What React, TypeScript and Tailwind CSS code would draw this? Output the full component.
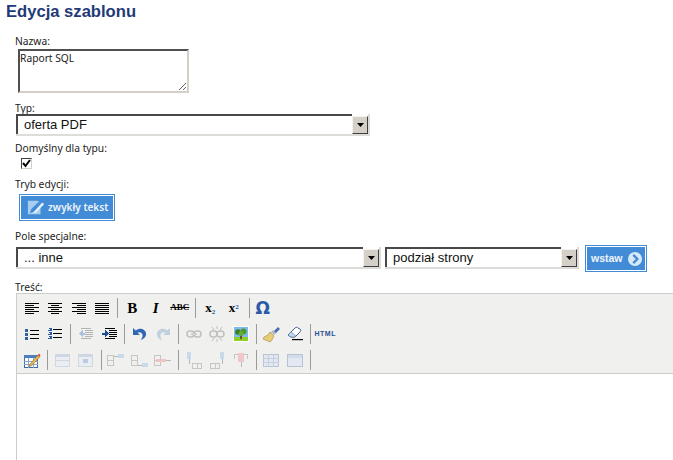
import React from "react";

const Sel = ({ text, className }: { text: string; className: string }) => (
  <div className={`flex h-[22px] items-stretch border-r-2 border-b-2 border-r-[#dcdcd8] border-b-[#dcdcd8] bg-white ${className}`}>
    <div className="flex min-w-0 flex-1 items-center border-t-2 border-l-2 border-t-[#484848] border-l-[#484848] pl-[6px] font-['Liberation_Sans',sans-serif] text-[13px] text-[#111]">
      {text}
    </div>
    <div className="mt-[2px] flex w-[16px] items-center justify-center border border-t-[#f4f2ec] border-l-[#f4f2ec] border-r-[#404040] border-b-[#404040] bg-[#d4d0c8]">
      <svg width="7" height="4" viewBox="0 0 7 4"><path d="M0 0h7L3.5 4z" fill="#000" /></svg>
    </div>
  </div>
);

const Label = ({ children, className = "" }: { children: React.ReactNode; className?: string }) => (
  <div className={`pl-[15px] text-[10.250px] leading-[13px] text-[#222] ${className}`}>{children}</div>
);

const Sep = () => (
  <div className="flex h-[20px] w-[7px] items-center justify-center">
    <div className="h-[20px] w-[1px] bg-[#9a9a9a]" />
  </div>
);

const Btn = ({ children }: { children?: React.ReactNode }) => (
  <div className="flex h-[20px] w-[23.5px] items-center justify-center">{children}</div>
);

const Ic = ({ children, w = 16, h = 16, o = 1 }: { children: React.ReactNode; w?: number; h?: number; o?: number }) => (
  <svg className="shrink-0" width={w} height={h} viewBox={`0 0 ${w} ${h}`} opacity={o} shapeRendering="crispEdges">{children}</svg>
);

const lines = (rows: [number, number][], stroke = "#000") => (
  <g fill={stroke}>{rows.map(([x, w], i) => <rect key={i} x={x} y={2 + i * 2} width={w} height={1} />)}</g>
);

const AlignL = () => <Ic w={14} h={14}>{lines([[0, 14], [0, 9], [0, 14], [0, 9], [0, 14], [0, 9]])}</Ic>;
const AlignC = () => <Ic w={14} h={14}>{lines([[0, 14], [3, 8], [0, 14], [3, 8], [0, 14], [3, 8]])}</Ic>;
const AlignR = () => <Ic w={14} h={14}>{lines([[0, 14], [5, 9], [0, 14], [5, 9], [0, 14], [5, 9]])}</Ic>;
const AlignJ = () => <Ic w={14} h={14}>{lines([[0, 14], [0, 14], [0, 14], [0, 14], [0, 14], [0, 14]])}</Ic>;

const Bullets = () => (
  <Ic w={14} h={14}>
    {[2, 6, 10].map((y) => (
      <g key={y}>
        <rect x="0" y={y} width="3" height="3" fill="#35609f" />
        <rect x="5" y={y + 1} width="9" height="1" fill="#000" />
      </g>
    ))}
  </Ic>
);
const Numbers = () => (
  <Ic w={14} h={14}>
    {[1, 5, 9].map((y) => (
      <g key={y}>
        <rect x="1" y={y} width="3" height="1" fill="#2a5aa0" />
        <rect x="2" y={y + 1} width="2" height="1" fill="#2a5aa0" />
        <rect x="0" y={y + 2} width="4" height="1" fill="#2a5aa0" />
        <rect x="5" y={y + 1} width="9" height="1" fill="#000" />
      </g>
    ))}
  </Ic>
);
const Outdent = ({ dark }: { dark?: boolean }) => (
  <Ic w={15} h={14}>
    <g fill={dark ? "#000" : "#b4b4b4"}>
      {[1, 3, 5, 7, 9, 11].map((y, i) => (
        <rect key={y} x={i > 0 && i < 5 ? 7 : 3} y={y} width={i > 0 && i < 5 ? 8 : 10} height="1" />
      ))}
    </g>
    <path d={dark ? "M3 3h1v1h1v1h1v1h1v1H6v1H5v1H4v1H3V8H0V6h3z" : "M5 3H4v1H3v1H2v1H1v1h1v1h1v1h1v1h1V8h2V6H5z"} fill={dark ? "#1d4f96" : "#a9c2de"} />
  </Ic>
);
const Undo = ({ redo }: { redo?: boolean }) => (
  <svg className="shrink-0" width="15" height="14" viewBox="0 0 15 14" style={redo ? { transform: "scaleX(-1)" } : undefined} opacity={redo ? 0.4 : 1}>
    <path d="M1 1v7h7L5.500 5.700c2.300-1.200 4.500-.3 5 2 .3 1.800-.5 3.800-2 5.300 3.500-.8 6-3.500 5.500-7C13 2 8 0 3.800 3.500L1 1z" fill={redo ? "#7d9fca" : "#2f67b4"} />
  </svg>
);
const Chain = ({ broken }: { broken?: boolean }) => (
  <svg className="shrink-0" width="16" height="16" viewBox="0 0 16 16">
    <rect x="1" y="5" width="7" height="6" rx="3" fill="none" stroke="#c0c0c0" strokeWidth="1.500" />
    <rect x="8" y="5" width="7" height="6" rx="3" fill="none" stroke="#c0c0c0" strokeWidth="1.500" />
    {broken ? (
      <path d="M8 0v3M8 13v3M3 1l2 3M13 1l-2 3M3 15l2-3M13 15l-2-3" stroke="#c0c0c0" fill="none" />
    ) : (
      <rect x="5" y="7" width="6" height="2" fill="#cfcfcf" />
    )}
  </svg>
);
const Picture = () => (
  <svg className="shrink-0" width="16" height="16" viewBox="0 0 16 16">
    <rect x="0" y="0" width="16" height="16" fill="#fff" />
    <rect x="1" y="1" width="14" height="14" fill="#7db9ee" />
    <rect x="1" y="11" width="14" height="4" fill="#8ed02a" />
    <rect x="7" y="8" width="2" height="5" fill="#7a4a14" />
    <circle cx="5" cy="6" r="2.800" fill="#3a7d22" />
    <circle cx="10.500" cy="5.500" r="3" fill="#4a9a2a" />
    <circle cx="8" cy="7.500" r="2.500" fill="#5fae30" />
  </svg>
);
const Brush = () => (
  <svg className="shrink-0" width="17" height="17" viewBox="0 0 17 17">
    <path d="M7 6l4 4-2 4-2 2-2-1-5-2 1-2 4-2z" fill="#e8cd78" stroke="#8a7330" strokeWidth="0.500" />
    <path d="M10 6l5-5 2 2-5 5z" fill="#4a6fb0" />
    <path d="M8 6l2-2 3 3-2 2z" fill="#b8b8c0" />
  </svg>
);
const Eraser = () => (
  <svg className="shrink-0" width="16" height="16" viewBox="0 0 16 16">
    <path d="M1 9l7-7c1-1 2-1 3 0l2 1c1 1 1 2 0 3l-5 5H4z" fill="#fff" stroke="#3c5c90" />
    <path d="M1 9l3-3 5 4-1 1H4z" fill="#c6d8ef" stroke="#3c5c90" strokeWidth="0.500" />
    <rect x="5" y="13" width="11" height="1.200" fill="#000" />
  </svg>
);
const Edit = () => (
  <svg className="shrink-0" width="18" height="17" viewBox="0 0 18 17">
    <rect x="1.500" y="3.500" width="13" height="12" fill="#fff" stroke="#3b6aa8" />
    <rect x="1" y="3" width="14" height="3" fill="#4d7fc0" />
    <path d="M1 9.500h14M1 12.500h14M5.500 6v10M10.500 6v10" stroke="#8aa6cc" fill="none" />
    <path d="M7 12l8-9 2 1.500-8 9-3 1z" fill="#e9b94e" stroke="#7a5a1a" strokeWidth="0.500" />
    <path d="M14.500 3.500l1.500-2 1.500 1.500-1 2z" fill="#d8584a" />
  </svg>
);
const TableBox = ({ inner }: { inner?: boolean }) => (
  <Ic w={15} h={13} o={0.75}>
    <rect x="0" y="0" width="15" height="13" fill="#c5cfdc" />
    <rect x="1" y="1" width="13" height="11" fill="#e8edf3" />
    <rect x="1" y="1" width="13" height="2" fill="#c3cfe0" />
    {inner ? <rect x="5" y="5" width="5" height="4" fill="#a7c0e0" /> : <rect x="1" y="6" width="13" height="1" fill="#c5cfdc" />}
  </Ic>
);
const Rows = ({ kind }: { kind: number }) => (
  <Ic w={18} h={16} o={0.65}>
    <g fill="none" stroke="#b0b0b0">
      <path d="M0.500 3.500h6v10h-6zM0.500 8.500h6" />
    </g>
    {kind === 2 ? (
      <>
        <rect x="2" y="7" width="10" height="3" fill="#eab0b0" />
        <path d="M12 8.500h5" stroke="#999" />
      </>
    ) : (
      <>
        <rect x={11} y={kind === 0 ? 2 : 11} width="6" height="4" fill="#b4cde8" />
        <path d={kind === 0 ? "M7 4h4" : "M7 13h4"} stroke="#999" />
      </>
    )}
  </Ic>
);
const Cols = ({ kind }: { kind: number }) => (
  <Ic w={16} h={17} o={0.65}>
    {kind === 2 ? (
      <>
        <path d="M1.500 6.500v-4h13v4" fill="none" stroke="#b0b0b0" />
        <rect x="5" y="1" width="6" height="9" fill="#eeb4b4" />
        <path d="M8 10v5" stroke="#999" />
      </>
    ) : (
      <>
        <rect x={kind === 0 ? 1 : 11} y="0" width="4" height="7" fill="#b4cde8" />
        <path d={kind === 0 ? "M3 7v5" : "M13 7v5"} stroke="#999" />
        <path d={kind === 0 ? "M6.500 11.500h9v5h-9zM11 11.500v5" : "M1.500 11.500h9v5h-9zM6 11.500v5"} fill="none" stroke="#b0b0b0" />
      </>
    )}
  </Ic>
);
const Grid = () => (
  <Ic w={16} h={13} o={0.7}>
    <rect x="0.500" y="0.500" width="15" height="12" fill="#dce6f3" stroke="#9fb0c8" />
    <path d="M0 4.500h16M0 8.500h16M5.500 0v13M10.500 0v13" stroke="#b4c2d6" />
  </Ic>
);
const Cell = () => (
  <Ic w={16} h={13} o={0.7}>
    <rect x="0.500" y="0.500" width="15" height="12" fill="#dde7f4" stroke="#9fb0c8" />
    <rect x="1" y="1" width="14" height="3" fill="#c4d5ea" />
  </Ic>
);

const EditIcon = () => (
  <svg className="shrink-0" width="18" height="17" viewBox="0 0 20 17">
    <path d="M1 1h11l3 3v12H1z" fill="#a9cdef" />
    <path d="M3 15l2-5 8-8 3 3-8 8z" fill="#428bd6" />
    <path d="M8 13l9-10 2 2-9 9-3 1z" fill="#e6f1fb" />
  </svg>
);

const txt = "font-['Liberation_Serif',serif] text-black";

export default function App() {
  return (
    <div className="h-[460px] w-[673px] overflow-hidden bg-white font-['Noto_Sans',sans-serif]">
      <h1 className="pl-[6px] pt-[2px] font-['Liberation_Sans',sans-serif] text-[16.600px] font-bold leading-[19px] text-[#1f3a78]">Edycja szablonu</h1>

      <Label className="mt-[14px]">Nazwa:</Label>
      <div className="relative ml-[18px] mt-[1px] flex h-[44px] w-[171px] flex-col border-2 border-t-[#505050] border-l-[#505050] border-r-[#d4d0c8] border-b-[#d4d0c8] pt-[1px] text-[10.250px] leading-[13px] text-[#222]">
        Raport SQL
        <svg className="absolute bottom-0 right-0" width="9" height="9" viewBox="0 0 9 9"><path d="M1 8l7-7M5 8l3-3" stroke="#666" fill="none" /></svg>
      </div>

      <Label className="mt-[9px]">Typ:</Label>
      <Sel text="oferta PDF" className="ml-[16px] -mt-[1px] w-[354px]" />

      <Label className="mt-[6px]">Domyślny dla typu:</Label>
      <div className="ml-[21px] mt-[3px] flex h-[11px] w-[11px] items-center justify-center border border-t-[#404040] border-l-[#404040] border-r-[#d4d0c8] border-b-[#d4d0c8] bg-white">
        <svg width="9" height="9" viewBox="0 0 9 9"><path d="M1 4l2.500 3L8 1" stroke="#000" strokeWidth="2" fill="none" /></svg>
      </div>

      <Label className="mt-[9px]">Tryb edycji:</Label>
      <div className="ml-[20px] mt-[4px] flex h-[25px] w-[94px] items-center gap-[3px] border border-white bg-[#428bd6] pl-[6px] text-[10px] font-semibold text-[#eef5fc] outline outline-[#428bd6]">
        <EditIcon />
        <span className="whitespace-nowrap">zwykły tekst</span>
      </div>

      <Label className="mt-[10px]">Pole specjalne:</Label>
      <div className="ml-[16px] mt-[3px] flex items-start">
        <Sel text="... inne" className="mt-[1px] w-[365px]" />
        <Sel text="podział strony" className="ml-[4px] mt-[1px] w-[194px]" />
        <div className="ml-[7px] flex h-[25px] w-[60px] items-center gap-[5px] border border-white bg-[#428bd6] pl-[4px] font-['Liberation_Sans',sans-serif] text-[10.500px] font-bold text-[#eef5fc] outline outline-[#428bd6]">
          wstaw
          <svg className="shrink-0" width="14" height="14" viewBox="0 0 12 12"><circle cx="6" cy="6" r="6" fill="#d7e8f8" /><path d="M4.500 2.500L8 6 4.500 9.500" stroke="#428bd6" strokeWidth="2" fill="none" /></svg>
        </div>
      </div>

      <Label className="mt-[10px]">Treść:</Label>
      <div className="ml-[16px] -mt-[1px] h-[200px] border-t border-l border-[#ccc] bg-white">
        <div className="flex h-[80px] flex-col gap-[6px] border-b border-[#ccc] bg-[#f0f0ee] pl-[3px] pt-[4px]">
          <div className="flex">
            <Btn><AlignL /></Btn><Btn><AlignC /></Btn><Btn><AlignR /></Btn><Btn><AlignJ /></Btn>
            <Sep />
            <Btn><span className={`${txt} -ml-[1px] text-[15px] font-bold`}>B</span></Btn>
            <Btn><span className={`${txt} -ml-[1px] text-[15px] font-bold italic`}>I</span></Btn>
            <Btn><span className={`${txt} text-[9px] font-bold line-through`}>ABC</span></Btn>
            <Sep />
            <Btn><span className={`${txt} text-[13px] font-bold`}>x<sub className="text-[7px] text-[#2a5aa0]">2</sub></span></Btn>
            <Btn><span className={`${txt} text-[13px] font-bold`}>x<sup className="text-[7px] text-[#2a5aa0]">2</sup></span></Btn>
            <Sep />
            <Btn><span className="-ml-[3px] font-['DejaVu_Sans',sans-serif] text-[17px] font-bold leading-none text-[#2a5aa8]">Ω</span></Btn>
          </div>
          <div className="flex">
            <Btn><Bullets /></Btn><Btn><Numbers /></Btn>
            <Sep />
            <Btn><Outdent /></Btn><Btn><Outdent dark /></Btn>
            <Sep />
            <Btn><Undo /></Btn><Btn><Undo redo /></Btn>
            <Sep />
            <Btn><Chain /></Btn><Btn><Chain broken /></Btn><Btn><Picture /></Btn>
            <Sep />
            <Btn><Brush /></Btn><Btn><Eraser /></Btn>
            <Sep />
            <Btn><span className="font-['Liberation_Sans',sans-serif] text-[7px] font-bold tracking-[0.5px] text-[#2a4f96]">HTML</span></Btn>
          </div>
          <div className="flex">
            <Btn><Edit /></Btn>
            <Sep />
            <Btn><TableBox /></Btn><Btn><TableBox inner /></Btn>
            <Sep />
            <Btn><Rows kind={0} /></Btn><Btn><Rows kind={1} /></Btn><Btn><Rows kind={2} /></Btn>
            <Sep />
            <Btn><Cols kind={0} /></Btn><Btn><Cols kind={1} /></Btn><Btn><Cols kind={2} /></Btn>
            <Sep />
            <Btn><Grid /></Btn><Btn><Cell /></Btn>
            <Sep />
          </div>
        </div>
      </div>
    </div>
  );
}
